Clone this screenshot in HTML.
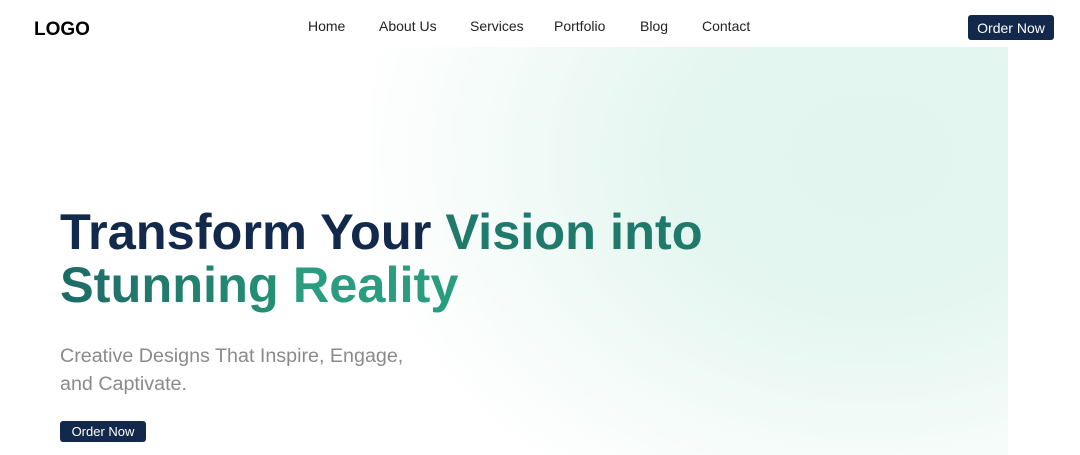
<!DOCTYPE html>
<html><head><meta charset="utf-8"><style>
*{margin:0;padding:0;box-sizing:border-box}
body{width:1080px;height:455px;overflow:hidden;background:#fff;font-family:"Liberation Sans",sans-serif;position:relative}
.bg{position:absolute;left:370px;top:47px;width:638px;height:408px;
background:radial-gradient(ellipse 520px 400px at 500px 110px,#e2f5ef 0%,#e5f6f0 40%,rgba(238,249,245,0.7) 70%,rgba(255,255,255,0) 100%);}
.logo{position:absolute;left:34px;top:19px;font-weight:bold;font-size:19px;color:#000}
nav{position:absolute;top:18px;font-size:14px;color:#222}
nav span{position:absolute;white-space:nowrap}
.btn{position:absolute;background:#13294b;color:#fff;border-radius:3px;font-size:14px;text-align:center}
h1{position:absolute;left:60px;top:205px;font-size:50.5px;line-height:53px;font-weight:bold;color:#13294b;white-space:nowrap}
.g1{color:#1f7a6c}
.g2{background:linear-gradient(90deg,#1e6a66,#259075);-webkit-background-clip:text;color:transparent}
.g3{color:#2a9d80}
p{position:absolute;left:60px;top:342px;font-size:19.7px;line-height:28px;color:#8a8a8a;width:420px}
</style></head><body>
<div class="bg"></div>
<div class="logo">LOGO</div>
<nav>
<span style="left:308px">Home</span>
<span style="left:379px">About Us</span>
<span style="left:470px">Services</span>
<span style="left:554px">Portfolio</span>
<span style="left:640px">Blog</span>
<span style="left:702px">Contact</span>
</nav>
<div class="btn" style="left:968px;top:15px;width:86px;height:25px;line-height:26px">Order Now</div>
<h1>Transform Your <span class="g1">Vision into</span><br><span class="g2">Stunning</span> <span class="g3">Reality</span></h1>
<p>Creative Designs That Inspire, Engage,<br>and Captivate.</p>
<div class="btn" style="left:60px;top:421px;width:86px;height:21px;line-height:22px;font-size:13px">Order Now</div>
</body></html>
